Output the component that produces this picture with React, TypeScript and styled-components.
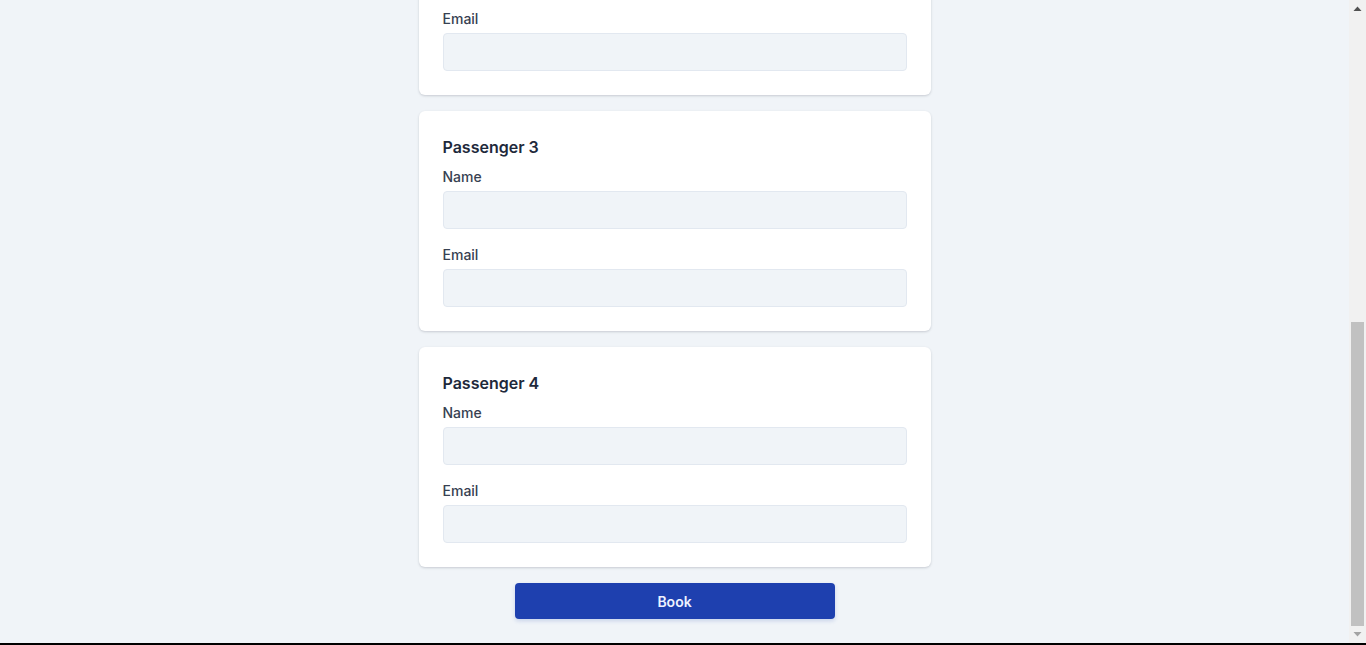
import React, { useLayoutEffect, useRef, useState } from "react";
import styled, { createGlobalStyle } from "styled-components";

const Global = createGlobalStyle`
  html, body { margin: 0; padding: 0; background: #000; height: 645px; overflow: hidden; }
  * { box-sizing: border-box; }
  body { font-family: Inter, "Noto Sans", "Liberation Sans", sans-serif; }
`;

const Frame = styled.div`
  height: 643px;
  display: flex;
  background: #f0f4f8;
`;

const Viewport = styled.div`
  flex: 1;
  height: 100%;
  overflow: hidden;
`;

const ScrollBar = styled.div`
  width: 17px;
  height: 100%;
  background: #f1f1f1;
  display: flex;
  flex-direction: column;
`;

const ScrollButton = styled.div`
  height: 17px;
  flex: none;
  display: flex;
  align-items: center;
  justify-content: center;
`;

const Track = styled.div`
  flex: 1;
  display: flex;
  flex-direction: column;
  justify-content: flex-end;
  padding: 0 2px;
`;

const Thumb = styled.div`
  background: #c1c1c1;
  width: 100%;
`;

const Page = styled.main`
  width: 512px;
  margin: 0 auto;
  padding: 24px 0;
  display: flex;
  flex-direction: column;
  gap: 16px;
`;

const Title = styled.h1`
  margin: 0;
  height: 40px;
  font-size: 26px;
  line-height: 40px;
  font-weight: 700;
  color: #1e293b;
`;

const Card = styled.section`
  background: #ffffff;
  border-radius: 6px;
  box-shadow: 0 1px 3px rgba(15, 23, 42, 0.12), 0 1px 2px rgba(15, 23, 42, 0.06);
  padding: 24px;
  display: flex;
  flex-direction: column;
`;

const CardTitle = styled.h2`
  margin: 0 0 8px;
  font-size: 16px;
  line-height: 24px;
  font-weight: 600;
  color: #1e293b;
`;

const Field = styled.label<{ $first?: boolean }>`
  display: flex;
  flex-direction: column;
  gap: 4px;
  margin-top: ${(p) => (p.$first ? "0" : "16px")};
`;

const LabelText = styled.span`
  font-size: 14px;
  line-height: 20px;
  font-weight: 500;
  color: #374151;
`;

const Input = styled.input`
  height: 38px;
  width: 100%;
  border: 1px solid #e2e8f0;
  border-radius: 4px;
  background: #f0f4f8;
  padding: 0 12px;
  font: inherit;
  font-size: 14px;
  color: #1e293b;
  outline: none;
`;

const Select = styled.select`
  height: 38px;
  width: 100%;
  border: 1px solid #e2e8f0;
  border-radius: 4px;
  background: #f0f4f8;
  padding: 0 12px;
  font: inherit;
  font-size: 14px;
  color: #1e293b;
`;

const ButtonRow = styled.div`
  display: flex;
  justify-content: center;
`;

const BookButton = styled.button`
  width: 320px;
  height: 36px;
  border: none;
  border-radius: 4px;
  background: #1e40af;
  color: #eef2ff;
  font-family: inherit;
  font-size: 14px;
  font-weight: 600;
  box-shadow: 0 2px 4px rgba(30, 64, 175, 0.18);
  cursor: pointer;
`;

const Arrow = ({ up, color }: { up?: boolean; color: string }) => (
  <svg width="9" height="5" viewBox="0 0 9 5">
    <path d={up ? "M0.5 5 L4.5 0.5 L8.5 5 Z" : "M0.5 0 L4.5 4.5 L8.5 0 Z"} fill={color} />
  </svg>
);

const passengers = [1, 2, 3, 4];

export default function App() {
  const ref = useRef<HTMLDivElement>(null);
  const [thumb, setThumb] = useState(304);
  useLayoutEffect(() => {
    const el = ref.current;
    if (!el) return;
    el.scrollTop = el.scrollHeight;
    const track = el.clientHeight - 34;
    setThumb(Math.round((el.clientHeight / el.scrollHeight) * track));
  }, []);
  return (
    <>
      <Global />
      <Frame>
        <Viewport ref={ref}>
          <Page>
            <Title>Book a Flight</Title>
            <Card>
              <Field $first>
                <LabelText>Flight</LabelText>
                <Select defaultValue="">
                  <option value="">Select a flight</option>
                </Select>
              </Field>
              <Field>
                <LabelText>Passengers</LabelText>
                <Input type="number" defaultValue={4} />
              </Field>
            </Card>
            {passengers.map((n) => (
              <Card key={n}>
                <CardTitle>Passenger {n}</CardTitle>
                <Field $first>
                  <LabelText>Name</LabelText>
                  <Input type="text" />
                </Field>
                <Field>
                  <LabelText>Email</LabelText>
                  <Input type="email" />
                </Field>
              </Card>
            ))}
            <ButtonRow>
              <BookButton>Book</BookButton>
            </ButtonRow>
          </Page>
        </Viewport>
        <ScrollBar>
          <ScrollButton>
            <Arrow up color="#505050" />
          </ScrollButton>
          <Track>
            <Thumb style={{ height: thumb }} />
          </Track>
          <ScrollButton>
            <Arrow color="#a3a3a3" />
          </ScrollButton>
        </ScrollBar>
      </Frame>
    </>
  );
}
